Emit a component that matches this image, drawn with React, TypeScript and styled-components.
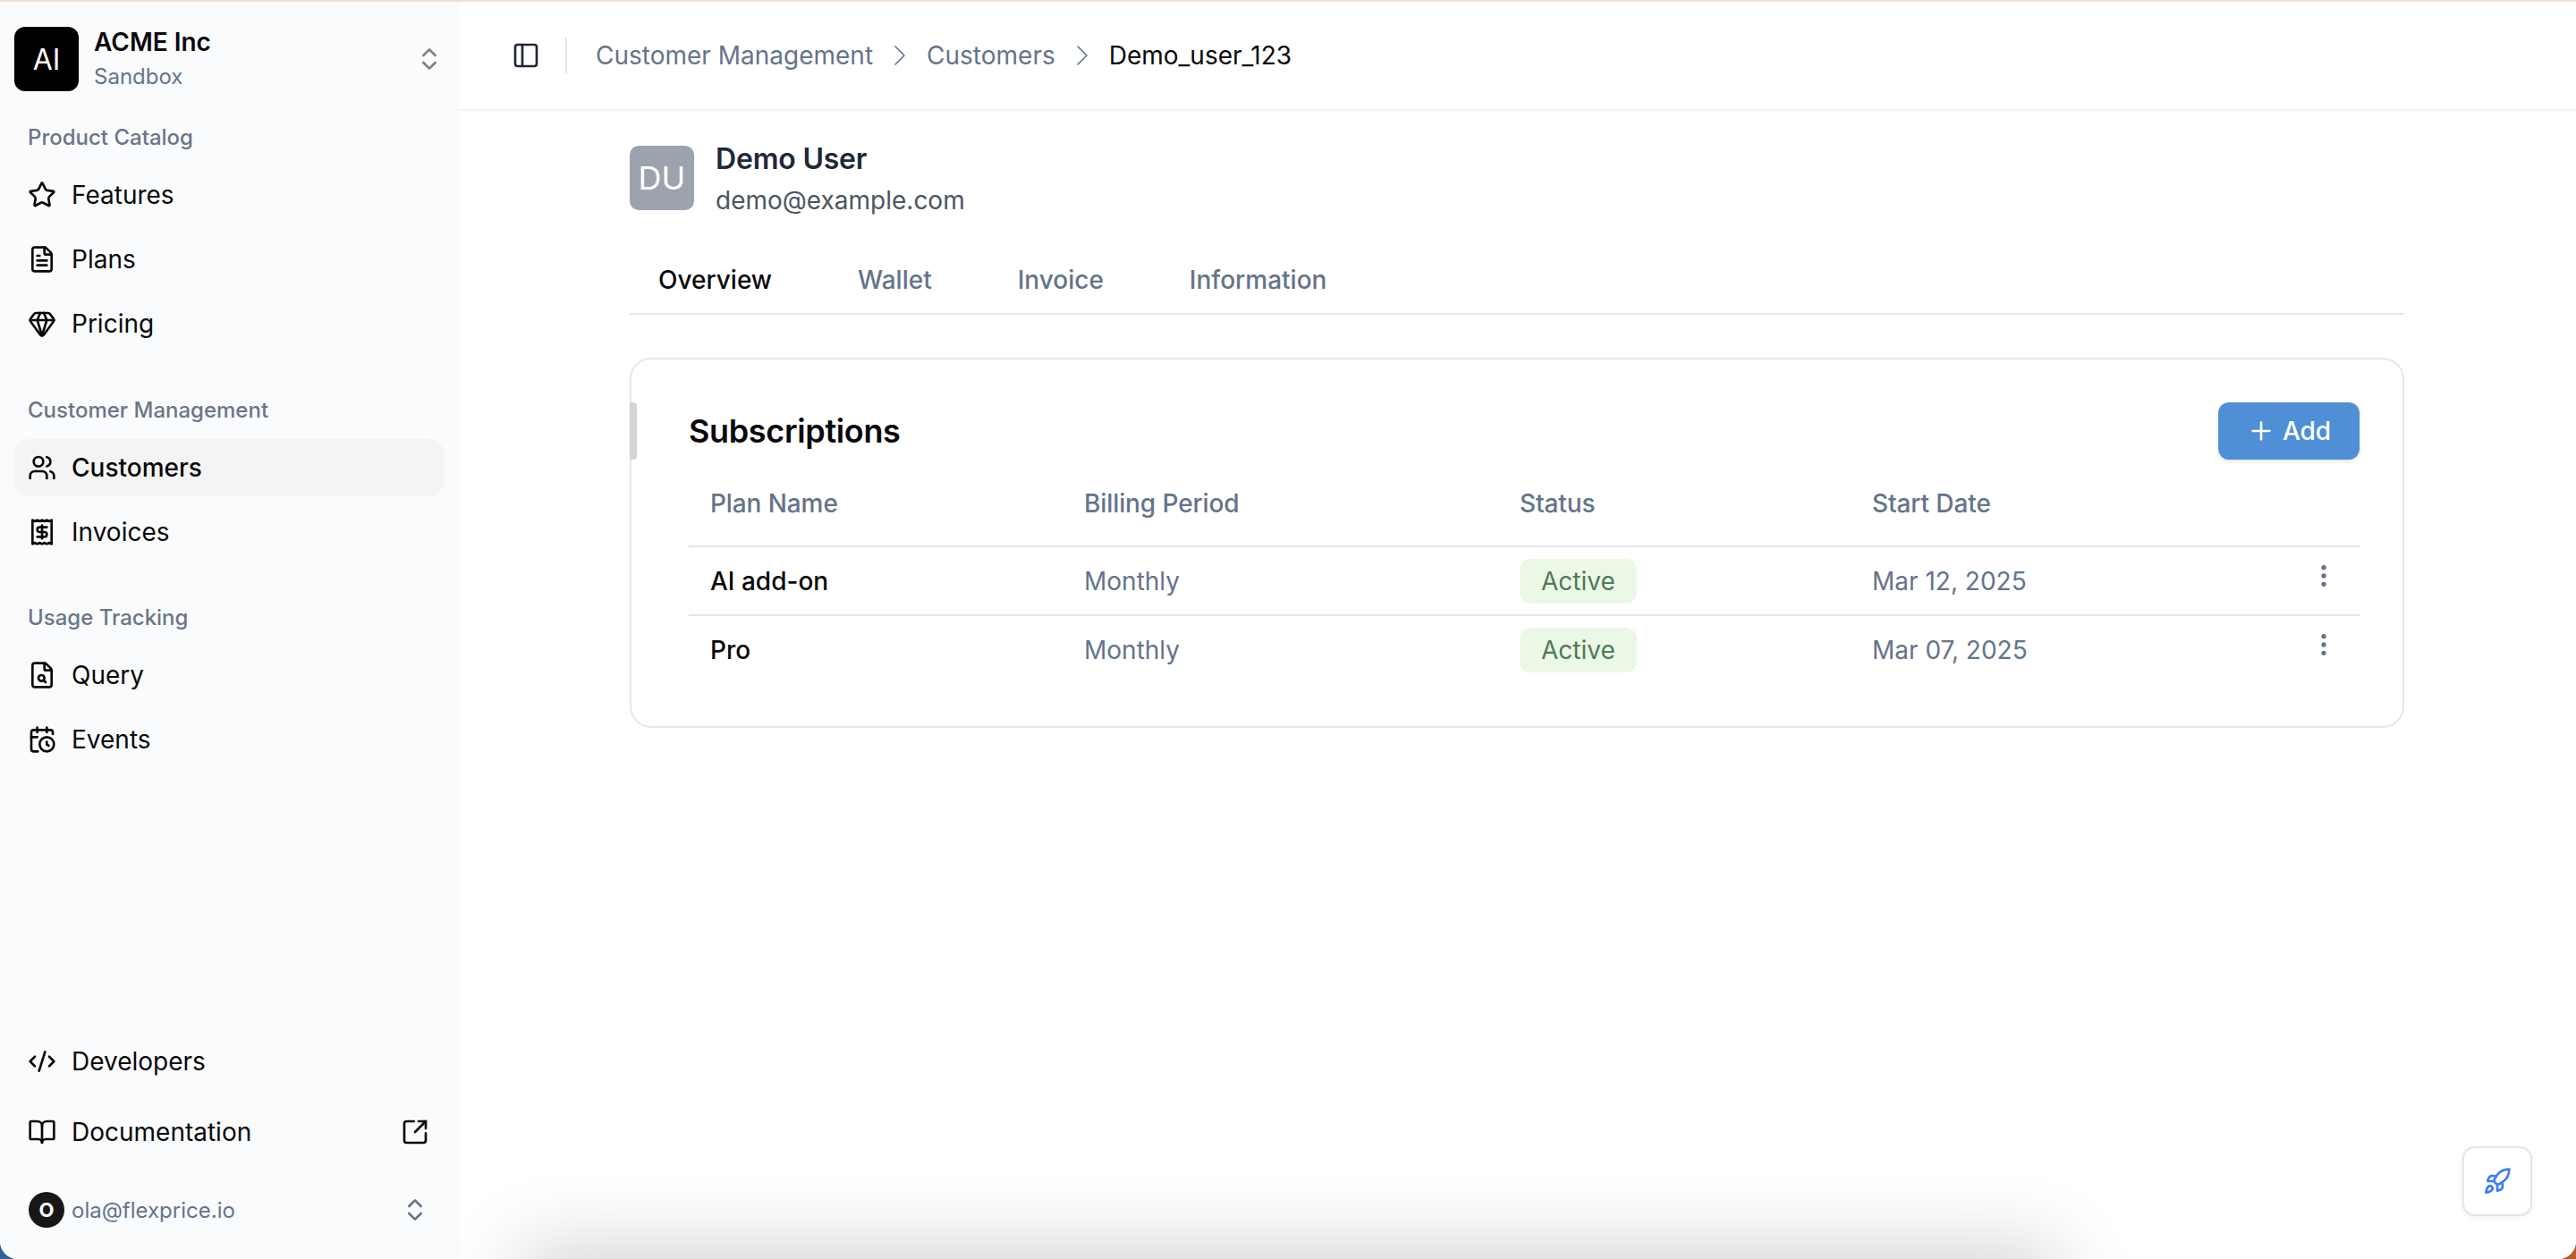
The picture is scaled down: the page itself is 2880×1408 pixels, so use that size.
import styled, { createGlobalStyle } from "styled-components";
import {
	BookOpen,
	CalendarClock,
	ChevronRight,
	ChevronsUpDown,
	CodeXml,
	EllipsisVertical,
	FileSearch,
	FileText,
	Gem,
	PanelLeft,
	Plus,
	Receipt,
	Rocket,
	SquareArrowOutUpRight,
	Star,
	Users,
} from "lucide-react";

const GlobalStyle = createGlobalStyle`
	html, body {
		margin: 0;
		padding: 0;
		height: 100%;
		overflow: hidden;
		font-family: Inter, "Liberation Sans", sans-serif;
	}
	* {
		box-sizing: border-box;
	}
`;

const navGroups = [
	{
		label: "Product Catalog",
		items: [
			{ name: "Features", icon: Star },
			{ name: "Plans", icon: FileText },
			{ name: "Pricing", icon: Gem },
		],
	},
	{
		label: "Customer Management",
		items: [
			{ name: "Customers", icon: Users, active: true },
			{ name: "Invoices", icon: Receipt },
		],
	},
	{
		label: "Usage Tracking",
		items: [
			{ name: "Query", icon: FileSearch },
			{ name: "Events", icon: CalendarClock },
		],
	},
];

const subscriptions = [
	{ plan: "AI add-on", period: "Monthly", status: "Active", date: "Mar 12, 2025" },
	{ plan: "Pro", period: "Monthly", status: "Active", date: "Mar 07, 2025" },
];

function App() {
	return (
		<Desktop>
			<GlobalStyle />
			<Window>
				<Sidebar>
					<OrgRow>
						<OrgLogo>AI</OrgLogo>
						<OrgText>
							<OrgName>ACME Inc</OrgName>
							<OrgEnv>Sandbox</OrgEnv>
						</OrgText>
						<ChevronsUpDown size={32} color="#808080" strokeWidth={2} />
					</OrgRow>
					<NavGroups>
						{navGroups.map((group) => (
							<div key={group.label}>
								<GroupLabel>{group.label}</GroupLabel>
								<NavList>
									{group.items.map((item) => (
										<NavItem key={item.name} $active={item.active}>
											<item.icon size={32} strokeWidth={2} />
											{item.name}
										</NavItem>
									))}
								</NavList>
							</div>
						))}
					</NavGroups>
					<SidebarFooter>
						<NavItem>
							<CodeXml size={32} strokeWidth={2} />
							Developers
						</NavItem>
						<NavItem>
							<BookOpen size={32} strokeWidth={2} />
							Documentation
							<ExternalIcon>
								<SquareArrowOutUpRight size={32} strokeWidth={2} />
							</ExternalIcon>
						</NavItem>
						<UserRow>
							<UserAvatar>O</UserAvatar>
							<UserEmail>ola@flexprice.io</UserEmail>
							<ChevronsUpDown size={32} color="#64748b" strokeWidth={2} />
						</UserRow>
					</SidebarFooter>
				</Sidebar>
				<Main>
					<TopBar>
						<ToggleButton>
							<PanelLeft size={32} strokeWidth={2} />
						</ToggleButton>
						<BarDivider />
						<Crumbs>
							<Crumb>Customer Management</Crumb>
							<ChevronRight size={40} strokeWidth={1} color="#64748b" />
							<Crumb>Customers</Crumb>
							<ChevronRight size={40} strokeWidth={1} color="#64748b" />
							<Crumb $current>Demo_user_123</Crumb>
						</Crumbs>
					</TopBar>
					<Content>
						<Profile>
							<ProfileAvatar>DU</ProfileAvatar>
							<div>
								<ProfileName>Demo User</ProfileName>
								<ProfileEmail>demo@example.com</ProfileEmail>
							</div>
						</Profile>
						<Tabs>
							<Tab $active>Overview</Tab>
							<Tab>Wallet</Tab>
							<Tab>Invoice</Tab>
							<Tab>Information</Tab>
						</Tabs>
						<Card>
							<CardNotch />
							<CardHeader>
								<CardTitle>Subscriptions</CardTitle>
								<AddButton>
									<Plus size={32} strokeWidth={2} />
									Add
								</AddButton>
							</CardHeader>
							<HeadRow>
								<HeadCell>Plan Name</HeadCell>
								<HeadCell>Billing Period</HeadCell>
								<HeadCell>Status</HeadCell>
								<HeadCell>Start Date</HeadCell>
							</HeadRow>
							{subscriptions.map((sub, index) => (
								<BodyRow key={sub.plan} $last={index === subscriptions.length - 1}>
									<PlanCell>{sub.plan}</PlanCell>
									<Cell>{sub.period}</Cell>
									<Cell>
										<StatusBadge>{sub.status}</StatusBadge>
									</Cell>
									<Cell>{sub.date}</Cell>
									<MenuCell>
										<EllipsisVertical size={32} strokeWidth={2} />
									</MenuCell>
								</BodyRow>
							))}
						</Card>
					</Content>
					<BottomGlow />
					<HelpButton>
						<Rocket size={32} strokeWidth={2} color="#3f7cf0" />
					</HelpButton>
				</Main>
			</Window>
		</Desktop>
	);
}

const Desktop = styled.div`
	width: 2880px;
	height: 1408px;
	border-top: 2px solid #f0dfd3;
	background: linear-gradient(90deg, #2f6299 0%, #6a5a6a 50%, #b5602a 100%);
`;
const Window = styled.div`
	display: flex;
	height: 100%;
	overflow: hidden;
	border-radius: 0 0 20px 20px;
	background: #fff;
`;
const Sidebar = styled.aside`
	display: flex;
	flex-direction: column;
	flex: 0 0 512px;
	padding: 28px 16px 35px;
	background: #f9fbfd;
	box-shadow: 1px 0 4px rgba(15, 23, 42, 0.03);
	position: relative;
	z-index: 1;
`;
const OrgRow = styled.div`
	display: flex;
	align-items: center;
	height: 72px;
	svg {
		flex: none;
	}
`;
const OrgLogo = styled.div`
	display: flex;
	align-items: center;
	justify-content: center;
	width: 72px;
	height: 72px;
	border-radius: 12px;
	background: #000;
	color: #fff;
	font-size: 32px;
`;
const OrgText = styled.div`
	flex: 1;
	margin-left: 17px;
`;
const OrgName = styled.div`
	font-size: 28px;
	line-height: 36px;
	font-weight: 600;
	color: #09090b;
`;
const OrgEnv = styled.div`
	margin-top: 4px;
	font-size: 24px;
	line-height: 34px;
	color: #64748b;
`;
const NavGroups = styled.nav`
	display: flex;
	flex-direction: column;
	gap: 47.5px;
	margin-top: 35px;
`;
const GroupLabel = styled.div`
	height: 32px;
	margin-bottom: 17px;
	padding-left: 15px;
	font-size: 24px;
	line-height: 34px;
	font-weight: 500;
	color: #6b7686;
`;
const NavList = styled.div`
	display: flex;
	flex-direction: column;
	gap: 8px;
`;
const NavItem = styled.div<{ $active?: boolean }>`
	display: flex;
	align-items: center;
	gap: 17px;
	height: 64px;
	padding: 0 16px 0 15px;
	border-radius: 16px;
	font-size: 28px;
	color: #09090b;
	font-weight: ${(props) => (props.$active ? 500 : 400)};
	background: ${(props) => (props.$active ? "#f4f4f5" : "transparent")};
	svg {
		flex: none;
	}
`;
const ExternalIcon = styled.span`
	display: flex;
	margin-left: auto;
`;
const SidebarFooter = styled.div`
	display: flex;
	flex-direction: column;
	gap: 15px;
	margin-top: auto;
`;
const UserRow = styled.div`
	display: flex;
	align-items: center;
	height: 40px;
	margin-top: 20px;
	padding: 0 16px;
`;
const UserAvatar = styled.div`
	display: flex;
	align-items: center;
	justify-content: center;
	width: 40px;
	height: 40px;
	border-radius: 50%;
	background: #171717;
	color: #fff;
	font-size: 22px;
	font-weight: 700;
`;
const UserEmail = styled.span`
	flex: 1;
	margin-left: 8px;
	font-size: 24px;
	color: #64748b;
`;
const Main = styled.main`
	flex: 1;
	position: relative;
	min-width: 0;
	background: #fff;
`;
const TopBar = styled.header`
	display: flex;
	align-items: center;
	height: 122px;
	padding-left: 60px;
	border-bottom: 2px solid #f3f3f3;
`;
const ToggleButton = styled.div`
	display: flex;
	color: #1f2937;
`;
const BarDivider = styled.div`
	width: 2px;
	height: 40px;
	margin: 0 32px 0 28px;
	background: #e5e7eb;
`;
const Crumbs = styled.div`
	display: flex;
	align-items: center;
	gap: 10px;
`;
const Crumb = styled.span<{ $current?: boolean }>`
	font-size: 28px;
	color: ${(props) => (props.$current ? "#09090b" : "#64748b")};
`;
const Content = styled.div`
	padding: 39px 192px 0;
`;
const Profile = styled.div`
	display: flex;
	gap: 24px;
`;
const ProfileAvatar = styled.div`
	display: flex;
	align-items: center;
	justify-content: center;
	width: 72px;
	height: 72px;
	border-radius: 10px;
	background: #9ca3af;
	color: #fff;
	font-size: 36px;
`;
const ProfileName = styled.div`
	font-size: 32px;
	line-height: 30px;
	font-weight: 600;
	letter-spacing: -0.2px;
	color: #1f2937;
`;
const ProfileEmail = styled.div`
	margin-top: 16px;
	font-size: 28px;
	line-height: 30px;
	color: #4b5563;
`;
const Tabs = styled.div`
	display: flex;
	align-items: center;
	gap: 32px;
	height: 81px;
	margin-top: 32px;
	padding-top: 5px;
	border-bottom: 2px solid #e5e7eb;
`;
const Tab = styled.div<{ $active?: boolean }>`
	padding: 0 33px 0 32px;
	margin-right: -1px;
	font-size: 28px;
	font-weight: 500;
	color: ${(props) => (props.$active ? "#09090b" : "#64748b")};
`;
const Card = styled.section`
	position: relative;
	height: 414px;
	margin-top: 48px;
	padding: 48px 48px 0 64px;
	border: 2px solid #e5e7eb;
	border-radius: 24px;
	background: #fff;
`;
const CardNotch = styled.div`
	position: absolute;
	left: -2px;
	top: 48px;
	width: 8px;
	height: 64px;
	border-radius: 0 4px 4px 0;
	background: #d4d4d8;
`;
const CardHeader = styled.div`
	display: flex;
	align-items: center;
	justify-content: space-between;
	height: 64px;
`;
const CardTitle = styled.h2`
	margin: 0;
	font-size: 36px;
	font-weight: 600;
	letter-spacing: -0.35px;
	color: #09090b;
`;
const AddButton = styled.button`
	display: flex;
	align-items: center;
	justify-content: center;
	gap: 8px;
	width: 158px;
	height: 64px;
	padding: 0;
	border: 0;
	border-radius: 12px;
	background: #4f8fd5;
	box-shadow: 0 2px 4px rgba(15, 23, 42, 0.12);
	color: #fff;
	font: inherit;
	font-size: 28px;
	font-weight: 500;
`;
const rowColumns = "418px 487px 394px 489px 80px";
const HeadRow = styled.div`
	display: grid;
	grid-template-columns: ${rowColumns};
	align-items: center;
	height: 98px;
	padding-top: 2px;
	border-bottom: 2px solid #e2e8f0;
`;
const BodyRow = styled.div<{ $last?: boolean }>`
	display: grid;
	grid-template-columns: ${rowColumns};
	align-items: center;
	height: ${(props) => (props.$last ? "76px" : "77px")};
	border-bottom: ${(props) => (props.$last ? "0" : "2px solid #e2e8f0")};
`;
const HeadCell = styled.div`
	padding-left: 24px;
	font-size: 28px;
	font-weight: 500;
	letter-spacing: -0.1px;
	color: #64748b;
`;
const Cell = styled.div`
	padding-left: 24px;
	font-size: 28px;
	color: #64748b;
`;
const PlanCell = styled(Cell)`
	font-weight: 500;
	color: #09090b;
`;
const StatusBadge = styled.span`
	display: inline-flex;
	align-items: center;
	height: 50px;
	padding: 0 24px;
	border-radius: 12px;
	background: #ecf8e6;
	color: #4f7a5b;
`;
const MenuCell = styled.div`
	display: flex;
	justify-content: center;
	padding-bottom: 12px;
	color: #64748b;
`;
const BottomGlow = styled.div`
	position: absolute;
	left: 80px;
	right: 590px;
	bottom: -60px;
	height: 60px;
	box-shadow: 0 0 90px 10px rgba(0, 0, 0, 0.2);
`;
const HelpButton = styled.div`
	position: absolute;
	right: 49px;
	bottom: 48px;
	display: flex;
	align-items: center;
	justify-content: center;
	width: 78px;
	height: 78px;
	border: 2px solid #e5e5e5;
	border-radius: 14px;
	background: #fff;
	box-shadow: 0 2px 6px rgba(0, 0, 0, 0.06);
`;

export default App;
